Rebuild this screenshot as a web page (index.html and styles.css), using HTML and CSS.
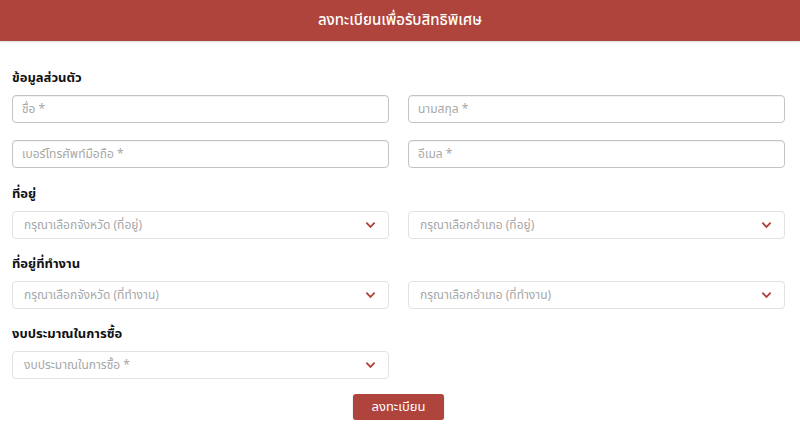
FILE: index.html
```html
<!DOCTYPE html>
<html lang="th">
<head>
<meta charset="utf-8">
<title>ลงทะเบียน</title>
<link rel="stylesheet" href="styles.css">
</head>
<body>
<header class="topbar">ลงทะเบียนเพื่อรับสิทธิพิเศษ</header>
<form class="form">
  <h3 class="section-title">ข้อมูลส่วนตัว</h3>
  <div class="row row-first">
    <input class="field text" placeholder="ชื่อ *">
    <input class="field text" placeholder="นามสกุล *">
  </div>
  <div class="row row-second">
    <input class="field text" placeholder="เบอร์โทรศัพท์มือถือ *">
    <input class="field text" placeholder="อีเมล *">
  </div>
  <h3 class="section-title">ที่อยู่</h3>
  <div class="row">
    <div class="field select"><span>กรุณาเลือกจังหวัด (ที่อยู่)</span><svg class="chev" viewBox="0 0 12 8"><path d="M1.5 1.5 6 6 10.5 1.5" /></svg></div>
    <div class="field select"><span>กรุณาเลือกอำเภอ (ที่อยู่)</span><svg class="chev" viewBox="0 0 12 8"><path d="M1.5 1.5 6 6 10.5 1.5" /></svg></div>
  </div>
  <h3 class="section-title">ที่อยู่ที่ทำงาน</h3>
  <div class="row">
    <div class="field select"><span>กรุณาเลือกจังหวัด (ที่ทำงาน)</span><svg class="chev" viewBox="0 0 12 8"><path d="M1.5 1.5 6 6 10.5 1.5" /></svg></div>
    <div class="field select"><span>กรุณาเลือกอำเภอ (ที่ทำงาน)</span><svg class="chev" viewBox="0 0 12 8"><path d="M1.5 1.5 6 6 10.5 1.5" /></svg></div>
  </div>
  <h3 class="section-title">งบประมาณในการซื้อ</h3>
  <div class="row">
    <div class="field select"><span>งบประมาณในการซื้อ *</span><svg class="chev" viewBox="0 0 12 8"><path d="M1.5 1.5 6 6 10.5 1.5" /></svg></div>
    <div></div>
  </div>
  <div class="actions"><button type="button" class="btn">ลงทะเบียน</button></div>
</form>
</body>
</html>
```
FILE: styles.css
```css
* { box-sizing: border-box; }
html, body { margin: 0; padding: 0; background: #fff; }
body { font-family: "Noto Sans Thai", "Noto Sans", "DejaVu Sans", sans-serif; color: #222; }
.topbar {
  height: 41px;
  background: #af443c;
  color: #fff;
  font-size: 15px;
  font-weight: 500;
  display: flex;
  align-items: center;
  justify-content: center;
  box-shadow: 0 1px 2px rgba(0,0,0,0.15);
}
.form { padding: 27px 15px 0 12px; }
.section-title {
  margin: 0 0 7px;
  font-size: 13px;
  font-weight: 700;
  line-height: 20px;
  color: #111;
}
.row {
  display: grid;
  grid-template-columns: 1fr 1fr;
  column-gap: 19px;
  margin-bottom: 15px;
}
.row-first { margin-bottom: 17px; }
.row-second { margin-bottom: 16px; }
.field {
  height: 28px;
  border-radius: 4px;
  font-family: inherit;
  font-size: 12px;
  padding: 0 9px;
  color: #333;
  background: #fff;
  width: 100%;
}
.text {
  border: 1px solid #c4c4c4;
  box-shadow: inset 0 1px 1px rgba(0,0,0,0.06);
  outline: none;
}
.text::placeholder { color: #a8a8a8; }
.select {
  border: 1px solid #e2e2e2;
  display: flex;
  align-items: center;
  justify-content: space-between;
  padding: 0 12px 0 11px;
  color: #a8a8a8;
}
.chev {
  width: 11px;
  height: 8px;
  fill: none;
  stroke: #b0433b;
  stroke-width: 2;
}
.actions { display: flex; justify-content: center; margin-top: 3px; }
.btn {
  width: 91px;
  height: 26px;
  background: #af443c;
  color: #fff;
  border: none;
  border-radius: 3px;
  font-family: inherit;
  font-size: 13px;
  box-shadow: 0 1px 2px rgba(0,0,0,0.2);
}
```
